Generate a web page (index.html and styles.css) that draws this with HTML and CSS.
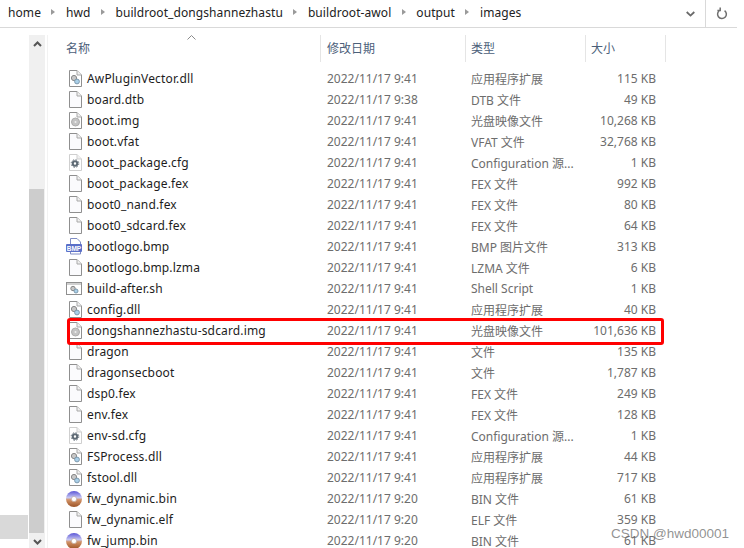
FILE: index.html
```html
<!DOCTYPE html>
<html lang="zh-CN">
<head>
	<meta charset="UTF-8">
	<title>images</title>
	<link rel="stylesheet" href="styles.css">
</head>
<body>
	<svg class="defs" width="0" height="0">
		<defs>
			<linearGradient id="disc" x1="0" y1="0" x2="0" y2="1">
				<stop offset="0" stop-color="#5a55d6"/>
				<stop offset=".42" stop-color="#c9c9f2"/>
				<stop offset=".55" stop-color="#d39468"/>
				<stop offset="1" stop-color="#9c5326"/>
			</linearGradient>
		</defs>
		<symbol id="i-blank" viewBox="0 0 14 17"><path d="M1.5.5H9L13.5 5V16.5H1.5Z" fill="#fbfbfd" stroke="#8f8f8f"/><path d="M9 .5V5H13.5" fill="#f0f0f0" stroke="#a8a8a8"/></symbol>
		<symbol id="i-dll" viewBox="0 0 14 17"><path d="M1.5.5H9L13.5 5V16.5H1.5Z" fill="#fff" stroke="#8f8f8f"/><path d="M9 .5V5H13.5" fill="#f0f0f0" stroke="#a8a8a8"/><circle cx="6" cy="8" r="2.6" fill="#c8c8c8" stroke="#888"/><circle cx="9" cy="11.5" r="2.4" fill="#a9cfe8" stroke="#7d99ad"/></symbol>
		<symbol id="i-img" viewBox="0 0 14 17"><path d="M1.5.5H9L13.5 5V16.5H1.5Z" fill="#fff" stroke="#8f8f8f"/><path d="M9 .5V5H13.5" fill="#f0f0f0" stroke="#a8a8a8"/><circle cx="7.5" cy="10" r="4" fill="#c4c4c4" stroke="#adadad"/><circle cx="7.5" cy="10" r="1" fill="#eee"/></symbol>
		<symbol id="i-cfg" viewBox="0 0 14 17"><path d="M1.5.5H9L13.5 5V16.5H1.5Z" fill="#fff" stroke="#cfcfcf"/><path d="M9 .5V5H13.5" fill="#f0f0f0" stroke="#cfcfcf"/><circle cx="7" cy="9.5" r="2.2" fill="none" stroke="#5f6b75" stroke-width="2"/><circle cx="7" cy="9.5" r="3.8" fill="none" stroke="#5f6b75" stroke-dasharray="1.5 1.5"/></symbol>
		<symbol id="i-sh" viewBox="0 0 16 13"><rect x=".5" y=".5" width="15" height="12" fill="#fff" stroke="#8f8f8f"/><rect x="1" y="1" width="14" height="2" fill="#d0d0d0"/><circle cx="7" cy="6.5" r="2.2" fill="#c8c8c8" stroke="#888"/><circle cx="10" cy="9" r="2" fill="#a9cfe8" stroke="#7d99ad"/></symbol>
		<symbol id="i-bin" viewBox="0 0 16 16"><circle cx="8" cy="8" r="8" fill="url(#disc)"/><circle cx="8" cy="8" r="2.6" fill="#fff" stroke="#b9a59a" stroke-width=".6"/></symbol>
	</svg>

	<div class="address">
		<div class="crumbs">
			<span>home</span><i class="sep"></i>
			<span>hwd</span><i class="sep"></i>
			<span>buildroot_dongshannezhastu</span><i class="sep"></i>
			<span>buildroot-awol</span><i class="sep"></i>
			<span>output</span><i class="sep"></i>
			<span>images</span>
		</div>
		<svg class="chev" width="9" height="6" viewBox="0 0 9 6"><path d="M.7 1L4.5 4.6 8.3 1" fill="none" stroke="#6a6a6a" stroke-width="1.8"/></svg>
		<div class="refresh">
			<svg width="12" height="13" viewBox="0 0 12 13"><path d="M4 3.2A4.4 4.4 0 1 0 8.6 3.6M4.2 .6V3.6H1.4" fill="none" stroke="#6f6f6f" stroke-width="1.5"/></svg>
		</div>
	</div>

	<div class="main">
		<div class="nav"><div class="nav-sel"></div></div>
		<div class="scroll">
			<svg class="arr" width="9" height="6" viewBox="0 0 9 6"><path d="M1 5L4.5 1.5 8 5" fill="none" stroke="#555" stroke-width="2"/></svg>
			<div class="track"><div class="thumb"></div></div>
			<svg class="arr" width="9" height="6" viewBox="0 0 9 6"><path d="M1 1L4.5 4.5 8 1" fill="none" stroke="#555" stroke-width="2"/></svg>
		</div>
		<div class="list">
			<div class="head">
				<svg class="sort" width="9" height="5" viewBox="0 0 9 5"><path d="M.5 4.5L4.5 .5 8.5 4.5" fill="none" stroke="#8a8a8a"/></svg>
				<div class="col c-name">名称</div>
				<div class="col c-date">修改日期</div>
				<div class="col c-type">类型</div>
				<div class="col c-size">大小</div>
			</div>
			<div class="row"><div class="icon"><svg width="14" height="17"><use href="#i-dll"/></svg></div><div class="name">AwPluginVector.dll</div><div class="date">2022/11/17 9:41</div><div class="type">应用程序扩展</div><div class="size">115 KB</div></div>
			<div class="row"><div class="icon"><svg width="14" height="17"><use href="#i-blank"/></svg></div><div class="name">board.dtb</div><div class="date">2022/11/17 9:38</div><div class="type">DTB 文件</div><div class="size">49 KB</div></div>
			<div class="row"><div class="icon"><svg width="14" height="17"><use href="#i-img"/></svg></div><div class="name">boot.img</div><div class="date">2022/11/17 9:41</div><div class="type">光盘映像文件</div><div class="size">10,268 KB</div></div>
			<div class="row"><div class="icon"><svg width="14" height="17"><use href="#i-blank"/></svg></div><div class="name">boot.vfat</div><div class="date">2022/11/17 9:41</div><div class="type">VFAT 文件</div><div class="size">32,768 KB</div></div>
			<div class="row"><div class="icon"><svg width="14" height="17"><use href="#i-cfg"/></svg></div><div class="name">boot_package.cfg</div><div class="date">2022/11/17 9:41</div><div class="type">Configuration 源...</div><div class="size">1 KB</div></div>
			<div class="row"><div class="icon"><svg width="14" height="17"><use href="#i-blank"/></svg></div><div class="name">boot_package.fex</div><div class="date">2022/11/17 9:41</div><div class="type">FEX 文件</div><div class="size">992 KB</div></div>
			<div class="row"><div class="icon"><svg width="14" height="17"><use href="#i-blank"/></svg></div><div class="name">boot0_nand.fex</div><div class="date">2022/11/17 9:41</div><div class="type">FEX 文件</div><div class="size">80 KB</div></div>
			<div class="row"><div class="icon"><svg width="14" height="17"><use href="#i-blank"/></svg></div><div class="name">boot0_sdcard.fex</div><div class="date">2022/11/17 9:41</div><div class="type">FEX 文件</div><div class="size">64 KB</div></div>
			<div class="row"><div class="icon"><svg class="wide" width="16" height="17" viewBox="0 0 16 17"><path d="M4.5.5H11L14.5 4V16H4.5Z" fill="#fff" stroke="#7f8cc4"/><rect x="0" y="6" width="16" height="8" rx="1" fill="#5a6fc8"/><text class="bmp-label" x="8" y="12.6">BMP</text></svg></div><div class="name">bootlogo.bmp</div><div class="date">2022/11/17 9:41</div><div class="type">BMP 图片文件</div><div class="size">313 KB</div></div>
			<div class="row"><div class="icon"><svg width="14" height="17"><use href="#i-blank"/></svg></div><div class="name">bootlogo.bmp.lzma</div><div class="date">2022/11/17 9:41</div><div class="type">LZMA 文件</div><div class="size">6 KB</div></div>
			<div class="row"><div class="icon"><svg class="wide" width="16" height="13"><use href="#i-sh"/></svg></div><div class="name">build-after.sh</div><div class="date">2022/11/17 9:41</div><div class="type">Shell Script</div><div class="size">1 KB</div></div>
			<div class="row"><div class="icon"><svg width="14" height="17"><use href="#i-dll"/></svg></div><div class="name">config.dll</div><div class="date">2022/11/17 9:41</div><div class="type">应用程序扩展</div><div class="size">40 KB</div></div>
			<div class="row"><div class="icon"><svg width="14" height="17"><use href="#i-img"/></svg></div><div class="name">dongshannezhastu-sdcard.img</div><div class="date">2022/11/17 9:41</div><div class="type">光盘映像文件</div><div class="size">101,636 KB</div></div>
			<div class="row"><div class="icon"><svg width="14" height="17"><use href="#i-blank"/></svg></div><div class="name">dragon</div><div class="date">2022/11/17 9:41</div><div class="type">文件</div><div class="size">135 KB</div></div>
			<div class="row"><div class="icon"><svg width="14" height="17"><use href="#i-blank"/></svg></div><div class="name">dragonsecboot</div><div class="date">2022/11/17 9:41</div><div class="type">文件</div><div class="size">1,787 KB</div></div>
			<div class="row"><div class="icon"><svg width="14" height="17"><use href="#i-blank"/></svg></div><div class="name">dsp0.fex</div><div class="date">2022/11/17 9:41</div><div class="type">FEX 文件</div><div class="size">249 KB</div></div>
			<div class="row"><div class="icon"><svg width="14" height="17"><use href="#i-blank"/></svg></div><div class="name">env.fex</div><div class="date">2022/11/17 9:41</div><div class="type">FEX 文件</div><div class="size">128 KB</div></div>
			<div class="row"><div class="icon"><svg width="14" height="17"><use href="#i-cfg"/></svg></div><div class="name">env-sd.cfg</div><div class="date">2022/11/17 9:41</div><div class="type">Configuration 源...</div><div class="size">1 KB</div></div>
			<div class="row"><div class="icon"><svg width="14" height="17"><use href="#i-dll"/></svg></div><div class="name">FSProcess.dll</div><div class="date">2022/11/17 9:41</div><div class="type">应用程序扩展</div><div class="size">44 KB</div></div>
			<div class="row"><div class="icon"><svg width="14" height="17"><use href="#i-dll"/></svg></div><div class="name">fstool.dll</div><div class="date">2022/11/17 9:41</div><div class="type">应用程序扩展</div><div class="size">717 KB</div></div>
			<div class="row"><div class="icon"><svg class="wide" width="16" height="16"><use href="#i-bin"/></svg></div><div class="name">fw_dynamic.bin</div><div class="date">2022/11/17 9:20</div><div class="type">BIN 文件</div><div class="size">61 KB</div></div>
			<div class="row"><div class="icon"><svg width="14" height="17"><use href="#i-blank"/></svg></div><div class="name">fw_dynamic.elf</div><div class="date">2022/11/17 9:20</div><div class="type">ELF 文件</div><div class="size">359 KB</div></div>
			<div class="row"><div class="icon"><svg class="wide" width="16" height="16"><use href="#i-bin"/></svg></div><div class="name">fw_jump.bin</div><div class="date">2022/11/17 9:20</div><div class="type">BIN 文件</div><div class="size">61 KB</div></div>
		</div>
	</div>
	<div class="hl"></div>
	<div class="mark">CSDN @hwd00001</div>
</body>
</html>
```

FILE: styles.css
```css
html,body{margin: 0;padding: 0;}
body{width: 744px;height: 548px;overflow: hidden;background: #fff;position: relative;
	font-family: "Noto Sans","Noto Sans CJK SC",sans-serif;font-size: 12px;color: #6d6d6d;}
.defs{display: block;height: 0;}
.bmp-label{font-family: "Liberation Sans",sans-serif;font-size: 6.5px;font-weight: bold;fill: #fff;text-anchor: middle;}

/* 地址栏 */
.address{height: 27px;display: flex;align-items: center;border-bottom: 1px solid #d9d9d9;width: 737px;}
.crumbs{flex: 1;display: flex;align-items: center;padding: 0 0 3px 8px;color: #222;letter-spacing: .08px;}
.sep{width: 0;height: 0;margin: 0 10.5px;border-left: 4px solid #9a9a9a;border-top: 3px solid transparent;border-bottom: 3px solid transparent;}
.chev{margin-right: 10px;}
.refresh{width: 32px;height: 27px;border-left: 1px solid #d9d9d9;display: flex;align-items: center;justify-content: center;box-sizing: border-box;}

.main{display: flex;height: 520px;}

/* 导航窗格 */
.nav{width: 29px;display: flex;flex-direction: column;justify-content: flex-end;padding-bottom: 9px;box-sizing: border-box;}
.nav-sel{width: 28px;height: 24px;background: #d9d9d9;}

/* 滚动条 */
.scroll{width: 16px;margin-top: 7px;background: #f0f0f0;display: flex;flex-direction: column;align-items: center;padding-top: 6px;box-sizing: border-box;}
.arr{flex: none;}
.track{flex: 1;width: 15px;margin: 6px 0;align-self: flex-start;padding-top: 136px;box-sizing: border-box;}
.thumb{background: #cdcdcd;height: 100%;}
.scroll .arr:last-child{margin-bottom: 3px;}

/* 列表 */
.list{flex: 1;margin: 7px 0 0 2px;border-left: 1px solid #f2f2f2;}
.head{display: flex;height: 28px;margin-bottom: 5px;position: relative;color: #4c607a;}
.sort{position: absolute;left: 139px;top: 0;}
.col{box-sizing: border-box;height: 27px;padding: 4px 0 0 6px;border-right: 1px solid #e5e5e5;}
.c-name{width: 273px;padding-left: 18px;}
.c-date{width: 145px;}
.c-type{width: 120px;padding-left: 5px;}
.c-size{width: 80px;padding-left: 5px;}

.row{display: flex;height: 21px;align-items: center;}
.icon{width: 19px;margin-left: 20px;display: flex;align-items: center;}
.wide{margin-left: -2px;}
.name{width: 240px;color: #1d1d1d;white-space: nowrap;letter-spacing: .16px;}
.date{width: 144px;white-space: nowrap;}
.type{width: 108px;white-space: nowrap;}
.size{width: 77px;text-align: right;white-space: nowrap;}

/* 红框和水印盖在列表上 */
.hl{position: absolute;left: 67px;top: 318px;width: 597px;height: 27px;border: 3px solid #f00;border-radius: 3px;box-sizing: border-box;}
.mark{position: absolute;right: 15px;bottom: 7px;color: rgba(110,110,110,.75);font-family: "Liberation Sans",sans-serif;font-size: 13.5px;}
```
